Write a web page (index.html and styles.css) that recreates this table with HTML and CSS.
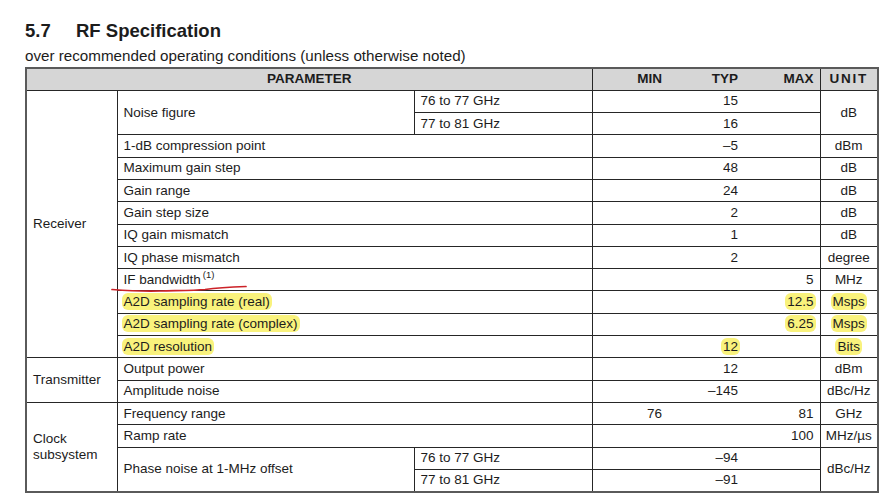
FILE: index.html
```html
<!DOCTYPE html>
<html>
<head>
<meta charset="utf-8">
<link rel="stylesheet" href="styles.css">
</head>
<body>
<div class="page">
  <h1 class="title"><span class="num">5.7</span><span>RF Specification</span></h1>
  <p class="sub">over recommended operating conditions (unless otherwise noted)</p>
  <table class="spec">
    <colgroup>
      <col class="c-cat"><col class="c-par"><col class="c-cond"><col class="c-v"><col class="c-v"><col class="c-v"><col class="c-unit">
    </colgroup>
    <thead>
      <tr>
        <th colspan="3" class="h-par">PARAMETER</th>
        <th class="h-num">MIN</th>
        <th class="h-num">TYP</th>
        <th class="h-num">MAX</th>
        <th class="h-unit">UNIT</th>
      </tr>
    </thead>
    <tbody>
      <tr>
        <td rowspan="12" class="cat">Receiver</td>
        <td rowspan="2">Noise figure</td>
        <td>76 to 77 GHz</td>
        <td class="n"></td><td class="n">15</td><td class="n"></td>
        <td rowspan="2" class="u">dB</td>
      </tr>
      <tr>
        <td>77 to 81 GHz</td>
        <td class="n"></td><td class="n">16</td><td class="n"></td>
      </tr>
      <tr><td colspan="2">1-dB compression point</td><td class="n"></td><td class="n">–5</td><td class="n"></td><td class="u">dBm</td></tr>
      <tr><td colspan="2">Maximum gain step</td><td class="n"></td><td class="n">48</td><td class="n"></td><td class="u">dB</td></tr>
      <tr><td colspan="2">Gain range</td><td class="n"></td><td class="n">24</td><td class="n"></td><td class="u">dB</td></tr>
      <tr><td colspan="2">Gain step size</td><td class="n"></td><td class="n">2</td><td class="n"></td><td class="u">dB</td></tr>
      <tr><td colspan="2">IQ gain mismatch</td><td class="n"></td><td class="n">1</td><td class="n"></td><td class="u">dB</td></tr>
      <tr><td colspan="2">IQ phase mismatch</td><td class="n"></td><td class="n">2</td><td class="n"></td><td class="u">degree</td></tr>
      <tr><td colspan="2">IF bandwidth<sup class="fn">(1)</sup></td><td class="n"></td><td class="n"></td><td class="n">5</td><td class="u">MHz</td></tr>
      <tr><td colspan="2"><span class="hl">A2D sampling rate (real)</span></td><td class="n"></td><td class="n"></td><td class="n"><span class="hl">12.5</span></td><td class="u"><span class="hl">Msps</span></td></tr>
      <tr><td colspan="2"><span class="hl">A2D sampling rate (complex)</span></td><td class="n"></td><td class="n"></td><td class="n"><span class="hl">6.25</span></td><td class="u"><span class="hl">Msps</span></td></tr>
      <tr><td colspan="2"><span class="hl">A2D resolution</span></td><td class="n"></td><td class="n"><span class="hl">12</span></td><td class="n"></td><td class="u"><span class="hl">Bits</span></td></tr>
      <tr>
        <td rowspan="2" class="cat">Transmitter</td>
        <td colspan="2">Output power</td><td class="n"></td><td class="n">12</td><td class="n"></td><td class="u">dBm</td>
      </tr>
      <tr><td colspan="2">Amplitude noise</td><td class="n"></td><td class="n">–145</td><td class="n"></td><td class="u">dBc/Hz</td></tr>
      <tr>
        <td rowspan="4" class="cat">Clock subsystem</td>
        <td colspan="2">Frequency range</td><td class="n">76</td><td class="n"></td><td class="n">81</td><td class="u">GHz</td>
      </tr>
      <tr><td colspan="2">Ramp rate</td><td class="n"></td><td class="n"></td><td class="n">100</td><td class="u">MHz/µs</td></tr>
      <tr>
        <td rowspan="2">Phase noise at 1-MHz offset</td>
        <td>76 to 77 GHz</td>
        <td class="n"></td><td class="n">–94</td><td class="n"></td>
        <td rowspan="2" class="u">dBc/Hz</td>
      </tr>
      <tr><td>77 to 81 GHz</td><td class="n"></td><td class="n">–91</td><td class="n"></td></tr>
    </tbody>
  </table>
  <svg class="mark" width="891" height="498" viewBox="0 0 891 498" xmlns="http://www.w3.org/2000/svg">
    <path d="M112 289.5 C 125 290.5, 140 291.5, 160 291 C 180 290.5, 195 290.5, 205 289.5 C 215 288, 230 287, 246 286.5" fill="none" stroke="#cc2228" stroke-width="1.7" stroke-linecap="round"/>
  </svg>
</div>
</body>
</html>
```
FILE: styles.css
```css
html, body {
  margin: 0;
  padding: 0;
  background: #ffffff;
}
.page {
  position: relative;
  width: 891px;
  height: 498px;
  padding: 20px 0 0 25px;
  box-sizing: border-box;
  font-family: "Liberation Sans", Arial, sans-serif;
  color: #1c1c1c;
  overflow: hidden;
}
.title {
  margin: 0;
  font-size: 18.5px;
  line-height: 22px;
  font-weight: bold;
  display: flex;
}
.title .num {
  width: 51px;
}
.sub {
  margin: 5px 0 0 0;
  font-size: 15.2px;
  line-height: 18px;
}
.spec {
  margin-top: 2px;
  border-collapse: collapse;
  table-layout: fixed;
  width: 852px;
  font-size: 13.5px;
  border: 2px solid #5a5a5a;
}
.c-cat { width: 91px; }
.c-par { width: 297px; }
.c-cond { width: 178px; }
.c-v { width: 76px; }
.c-unit { width: 58px; }
.spec tr {
  height: 22.3px;
}
.spec th, .spec td {
  border: 1px solid #262626;
  padding: 0 6px;
  white-space: nowrap;
  overflow: visible;
  vertical-align: middle;
  line-height: 16px;
}
.spec thead th {
  background: #d6d6d6;
  font-weight: bold;
  font-size: 13.5px;
  border-bottom: 1px solid #262626;
}
.spec .h-par { text-align: center; }
.spec .h-num { text-align: right; border-left: none; border-right: none; }
.spec thead .h-num:first-of-type { border-left: 1px solid #262626; }
.spec .h-unit { text-align: center; letter-spacing: 1.8px; padding: 0; border-left: 1px solid #262626; }
.spec td.n {
  text-align: right;
  border-left: none;
  border-right: none;
}
.spec td.u {
  text-align: center;
  padding: 0;
  border-left: 1px solid #262626;
}
.spec td.cat {
  white-space: normal;
  text-align: left;
  line-height: 16px;
}
.fn {
  font-size: 9.5px;
  vertical-align: 6px;
  line-height: 0;
  margin-left: 2px;
}
.hl {
  background: #f9f27c;
  border-radius: 6px;
  padding: 1px 2px;
  margin: 0 -2px;
}
.mark {
  position: absolute;
  left: 0;
  top: 0;
  pointer-events: none;
}
```
